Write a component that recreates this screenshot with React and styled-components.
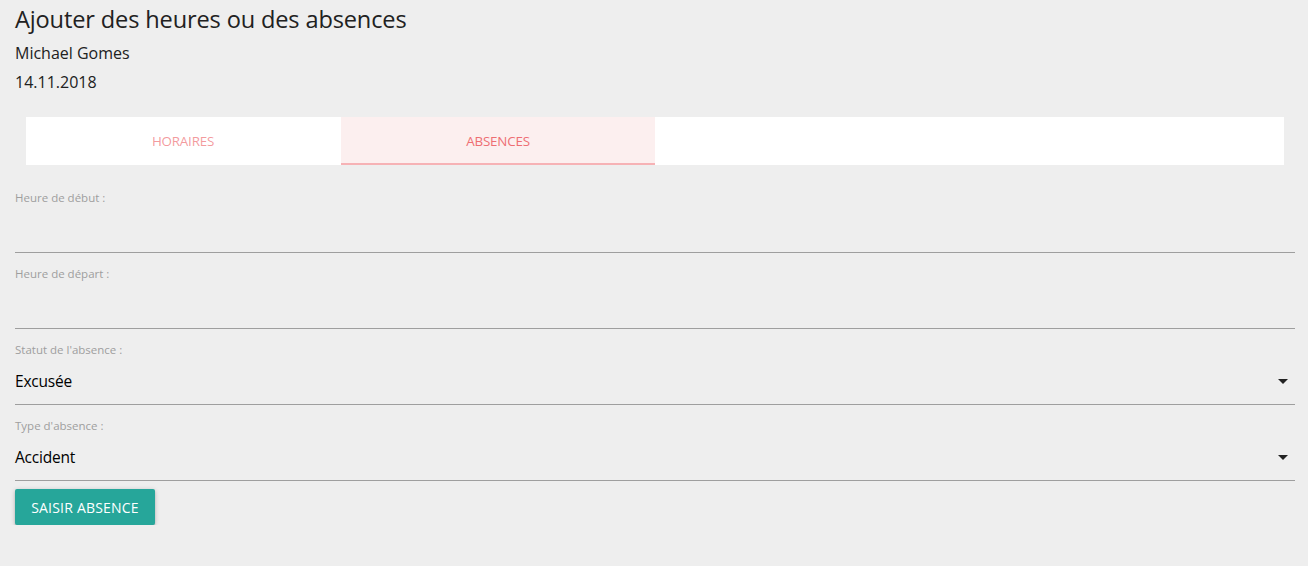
import React from "react";
import styled, { createGlobalStyle } from "styled-components";

const GlobalStyle = createGlobalStyle`
  html, body {
    margin: 0;
    padding: 0;
    background: #eeeeee;
  }
  body {
    font-family: "Open Sans", "Noto Sans", sans-serif;
    color: #212121;
  }
`;

const Page = styled.div`
  padding: 3px 13px 0 15px;
`;

const Title = styled.h1`
  margin: 0;
  font-size: 23.6px;
  font-weight: 400;
  line-height: 32px;
  letter-spacing: -0.15px;
`;

const InfoLine = styled.div`
  font-size: 16px;
  line-height: 29px;
  letter-spacing: 0;
  &:first-of-type {
    margin-top: 3.5px;
  }
`;

const Tabs = styled.div`
  display: flex;
  height: 48px;
  margin: 20.5px 11px 0;
  background: #fff;
`;

const Tab = styled.div`
  width: 314px;
  display: flex;
  align-items: center;
  justify-content: center;
  font-size: 13.4px;
  letter-spacing: -0.2px;
  text-transform: uppercase;
  color: ${(p) => (p.$active ? "#ee6e73" : "rgba(238, 110, 115, 0.7)")};
  background: ${(p) => (p.$active ? "#fcefef" : "transparent")};
  box-shadow: ${(p) => (p.$active ? "inset 0 -2px 0 #f6b2b5" : "none")};
  & + & {
    margin-left: 1px;
  }
`;

const Form = styled.form`
  display: flex;
  flex-direction: column;
  gap: 13px;
  margin-top: 25px;
`;

const Field = styled.div`
  display: flex;
  flex-direction: column;
`;

const Label = styled.label`
  font-size: 11.5px;
  line-height: 16px;
  color: #9e9e9e;
`;

const Input = styled.div`
  height: 46px;
  border-bottom: 1px solid #9e9e9e;
  display: flex;
  align-items: center;
  justify-content: space-between;
  font-size: 15.5px;
  color: #000;
  letter-spacing: -0.2px;
`;

const Caret = styled.span`
  width: 0;
  height: 0;
  border-left: 5px solid transparent;
  border-right: 5px solid transparent;
  border-top: 5px solid #222;
  margin-right: 7px;
`;

const Button = styled.button`
  align-self: flex-start;
  margin-top: -5px;
  width: 140px;
  height: 36px;
  border: none;
  border-radius: 2px;
  background: #26a69a;
  color: #fff;
  font-family: inherit;
  font-size: 14px;
  letter-spacing: 0.2px;
  text-transform: uppercase;
  box-shadow: 0 2px 2px 0 rgba(0, 0, 0, 0.14), 0 3px 1px -2px rgba(0, 0, 0, 0.12),
    0 1px 5px 0 rgba(0, 0, 0, 0.2);
  cursor: pointer;
`;

const fields = [
  { label: "Heure de début :", value: "" },
  { label: "Heure de départ :", value: "" },
  { label: "Statut de l'absence :", value: "Excusée", select: true },
  { label: "Type d'absence :", value: "Accident", select: true },
];

export default function App() {
  return (
    <>
      <GlobalStyle />
      <Page>
        <Title>Ajouter des heures ou des absences</Title>
        <InfoLine>Michael Gomes</InfoLine>
        <InfoLine>14.11.2018</InfoLine>
        <Tabs>
          <Tab>Horaires</Tab>
          <Tab $active>Absences</Tab>
        </Tabs>
        <Form onSubmit={(e) => e.preventDefault()}>
          {fields.map((f) => (
            <Field key={f.label}>
              <Label>{f.label}</Label>
              <Input>
                <span>{f.value}</span>
                {f.select && <Caret />}
              </Input>
            </Field>
          ))}
          <Button type="submit">Saisir absence</Button>
        </Form>
      </Page>
    </>
  );
}
